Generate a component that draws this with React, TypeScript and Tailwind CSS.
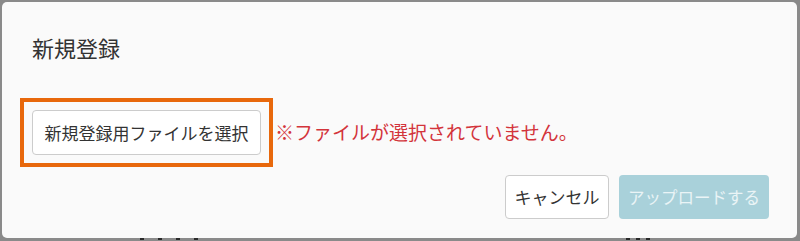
import React from 'react';

const font = { fontFamily: '"Noto Sans CJK JP", "Noto Sans", sans-serif' };

const App = () => {
  return (
    <div
      className="w-[800px] h-[241px] bg-[#8a8a8a] pt-[2px] pl-[2px] pr-[3px] overflow-hidden"
      style={font}
    >
      <div className="h-[236px] bg-[#fafafa] rounded-[5px] flex flex-col">
        <div className="pl-[30px] pt-[30px] text-[22px] leading-[30px] text-[#333]">
          新規登録
        </div>
        <div className="mt-[36px] pl-[18px] flex items-center">
          <div className="border-[4px] border-[#e8680c] p-[8px] pr-[8px]">
            <button className="h-[45px] w-[229px] bg-white border border-[#cccccc] rounded-[4px] text-[17px] text-[#333] flex items-center justify-center">
              新規登録用ファイルを選択
            </button>
          </div>
          <span className="ml-[2px] text-[19px] text-[#d3343b]">
            ※ファイルが選択されていません。
          </span>
        </div>
        <div className="mt-[8px] pr-[28px] flex justify-end gap-[10px]">
          <button className="h-[44px] w-[104px] bg-white border border-[#cccccc] rounded-[4px] text-[17px] text-[#333]">
            キャンセル
          </button>
          <button className="h-[44px] w-[150px] bg-[#a9d1da] rounded-[4px] text-[16.5px] text-[#eaf4f6]">
            アップロードする
          </button>
        </div>
      </div>
      {/* edge of the page behind the dialog */}
      <div className="h-[3px] flex items-end pb-[1px]">
        <div className="ml-[138px] flex gap-[14px]">
          <div className="w-[4px] h-[2px] bg-[#2a2a2a]" />
          <div className="w-[4px] h-[2px] bg-[#2a2a2a]" />
          <div className="w-[4px] h-[2px] bg-[#2a2a2a]" />
          <div className="w-[4px] h-[2px] bg-[#2a2a2a]" />
        </div>
        <div className="ml-[428px] flex gap-[6px]">
          <div className="w-[4px] h-[2px] bg-[#2a2a2a]" />
          <div className="w-[4px] h-[2px] bg-[#2a2a2a]" />
          <div className="w-[4px] h-[2px] bg-[#2a2a2a]" />
        </div>
      </div>
    </div>
  );
};

export default App;
